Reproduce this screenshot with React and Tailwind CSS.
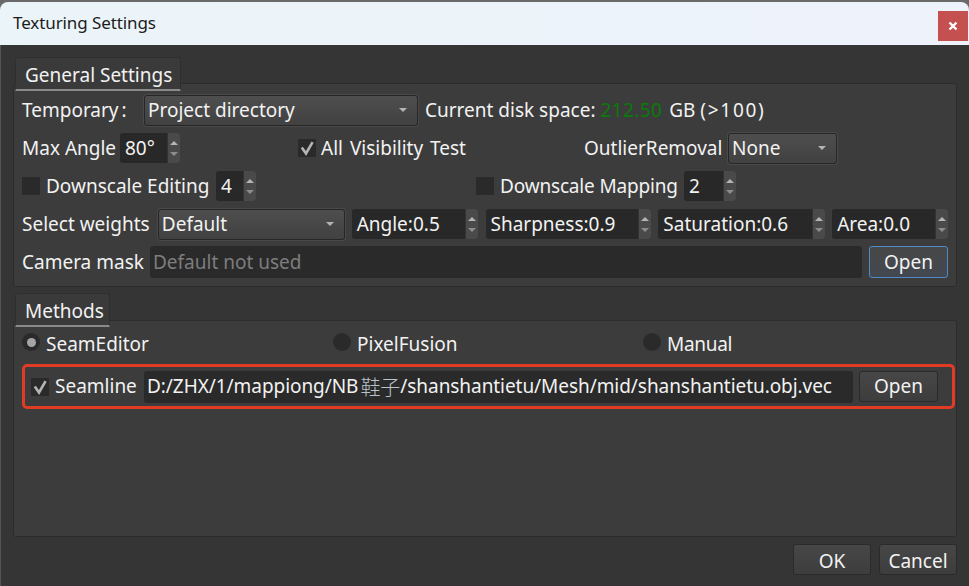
function Combo({ text, className }) {
  return (
    <div className={`h-[31px] flex items-center justify-between pl-[3px] pr-[10px] rounded-[3px] border border-[#262626] bg-gradient-to-b from-[#4e4e4e] to-[#414141] shadow-[0_0_0_1px_#4a4a4a] ${className}`}>
      <span>{text}</span>
      <span className="w-0 h-0 border-x-[4px] border-x-transparent border-t-[4px] border-t-[#b4b4b4]" />
    </div>
  );
}

function Spin({ text, className }) {
  return (
    <div className={`h-[30px] flex items-center justify-between pl-[5px] rounded-[3px] bg-[#282828] overflow-hidden ${className}`}>
      <span>{text}</span>
      <span className="w-[13px] h-full bg-[#4a4a4a] flex flex-col items-center justify-center gap-[7px] border-l border-[#333]">
        <span className="w-0 h-0 border-x-[4px] border-x-transparent border-b-[4px] border-b-[#b4b4b4]" />
        <span className="w-0 h-0 border-x-[4px] border-x-transparent border-t-[4px] border-t-[#8c8c8c]" />
      </span>
    </div>
  );
}

function CheckBox({ checked }) {
  return (
    <span className="w-[18px] h-[18px] shrink-0 bg-[#2a2a2a] flex items-center justify-center">
      {checked && (
        <svg width="18" height="18" viewBox="0 0 18 18" fill="none">
          <polyline points="3.8,8.5 8,14.5 14.6,3.2" stroke="#b4b4b4" strokeWidth="2.6" />
        </svg>
      )}
    </span>
  );
}

function Radio({ checked }) {
  return (
    <span className="w-[18px] h-[18px] shrink-0 rounded-full bg-[#2a2a2a] flex items-center justify-center">
      {checked && <span className="w-[9px] h-[9px] rounded-full bg-[#a5a5a5]" />}
    </span>
  );
}

function Button({ children, className }) {
  return (
    <button className={`h-[31px] rounded-[3px] border border-[#2a2a2a] bg-gradient-to-b from-[#474747] to-[#3d3d3d] text-[#f2f2f2] ${className}`}>
      {children}
    </button>
  );
}

function Tab({ children, className }) {
  return (
    <div className={`relative z-10 h-[34px] pl-[9px] pt-[1px] rounded-t-[3px] border-x border-t border-[#2f2f2f] bg-[#3a3a3a] border-b-2 border-b-[#8a8a8a] leading-[32px] ml-[2px] whitespace-nowrap ${className}`}>
      {children}
    </div>
  );
}

export default function App() {
  return (
    <div className="w-[969px] h-[586px] overflow-hidden bg-[#6a6a6a] pt-[2px] flex flex-col text-[19px] leading-none whitespace-nowrap text-[#f2f2f2] font-['Noto_Sans','Open_Sans',sans-serif]">
      {/* TITLE BAR */}
      <div className="h-[43px] shrink-0 rounded-t-lg bg-gradient-to-r from-[#ebf4f8] to-[#edf2fb] flex items-center justify-between pl-[13px] pr-px">
        <span className="text-[#1c1c1c] text-[17px] tracking-[-0.1px] mb-[2px]">Texturing Settings</span>
        <span className="w-[30px] h-[30px] mt-[5px] bg-[#c45050] flex items-center justify-center">
          <svg width="10" height="10" viewBox="0 0 10 10" fill="none">
            <path d="M1.5 1.5 8.5 8.5M8.5 1.5 1.5 8.5" stroke="#ffffff" strokeWidth="2.4" />
          </svg>
        </span>
      </div>

      <div className="flex-1 bg-[#353535] pt-[12px] px-[12px] flex flex-col border-l border-[#555]">
        {/* GENERAL SETTINGS */}
        <Tab className="w-[166px]">General Settings</Tab>
        <div className="h-[204px] -mt-[8px] rounded-[3px] border border-[#2c2c2c] bg-[#3c3c3c] px-[8px] pt-[11px] flex flex-col gap-2">
          <div className="h-[30px] flex items-center">
            <span className="w-[122px]">Temporary<span className="ml-[3px]">:</span></span>
            <Combo text="Project directory" className="w-[274px]" />
            <span className="ml-[7px] whitespace-pre">
              Current disk space: <span className="text-[#0a7a0a] tracking-[0.4px]">212.50</span> <span className="ml-[2px]">GB</span> <span className="tracking-[1.7px]">(&gt;100)</span>
            </span>
          </div>

          <div className="h-[30px] flex items-center">
            <span className="w-[98px]">Max Angle</span>
            <Spin text="80°" className="w-[60px]" />
            <span className="ml-[118px] mr-[5px]"><CheckBox checked /></span>
            <span className="w-[263px] [word-spacing:2px]">All Visibility Test</span>
            <span className="w-[144px]">OutlierRemoval</span>
            <Combo text="None" className="w-[109px]" />
          </div>

          <div className="h-[30px] flex items-center">
            <CheckBox />
            <span className="ml-[6px] w-[170px]">Downscale Editing</span>
            <Spin text="4" className="w-[40px]" />
            <span className="ml-[220px] mr-[6px]"><CheckBox /></span>
            <span className="w-[184px] tracking-[-0.17px]">Downscale Mapping</span>
            <Spin text="2" className="w-[52px]" />
          </div>

          <div className="h-[30px] flex items-center">
            <span className="w-[136px]">Select weights</span>
            <Combo text="Default" className="w-[187px]" />
            <Spin text="Angle:0.5" className="ml-[7px] w-[126px]" />
            <Spin text="Sharpness:0.9" className="ml-[8px] w-[166px]" />
            <Spin text="Saturation:0.6" className="ml-[7px] w-[167px]" />
            <Spin text="Area:0.0" className="ml-[7px] w-[116px]" />
          </div>

          <div className="h-[32px] -mt-px flex items-center">
            <span className="w-[128px]">Camera mask</span>
            <div className="w-[712px] h-[32px] rounded-[3px] bg-[#2a2a2a] flex items-center pl-[3px] text-[#7d7d7d]">Default not used</div>
            <Button className="ml-[7px] w-[79px] h-[32px] border-[#4d8cc8] from-[#4d5460] to-[#434850]">Open</Button>
          </div>
        </div>

        {/* METHODS */}
        <Tab className="w-[95px] mt-[6px]">Methods</Tab>
        <div className="h-[217px] -mt-[7px] rounded-[3px] border border-[#2c2c2c] bg-[#3c3c3c] pl-[8px] pr-[2px] pt-[12px] flex flex-col">
          <div className="h-[18px] flex items-center">
            <Radio checked />
            <span className="ml-[6px] w-[287px] pt-[4px]">SeamEditor</span>
            <Radio />
            <span className="ml-[6px] w-[286px] pt-[4px]">PixelFusion</span>
            <Radio />
            <span className="ml-[6px] pt-[4px] tracking-[-0.3px]">Manual</span>
          </div>

          {/* SEAMLINE */}
          <div className="mt-[13px] w-[933px] h-[45px] rounded-[5px] border-[3px] border-[#e03c25] flex items-center pl-[6px]">
            <CheckBox checked />
            <span className="ml-[6px] w-[89px]">Seamline</span>
            <div className="w-[709px] h-[32px] rounded-[3px] bg-[#2a2a2a] flex items-center pl-[3px] tracking-[-0.06px]">
              D:/ZHX/1/mappiong/NB<span className="ml-[2px] text-[20px] font-['Noto_Sans_CJK_SC',serif] font-light text-[#b9c3cc]">鞋子</span>/shanshantietu/Mesh/mid/shanshantietu.obj.vec
            </div>
            <Button className="ml-[6px] w-[79px]">Open</Button>
          </div>
        </div>

        {/* FOOTER */}
        <div className="mt-[7px] flex justify-end gap-2">
          <Button className="w-[78px] pt-[3px]">OK</Button>
          <Button className="w-[78px] pt-[3px]">Cancel</Button>
        </div>
      </div>
    </div>
  );
}
